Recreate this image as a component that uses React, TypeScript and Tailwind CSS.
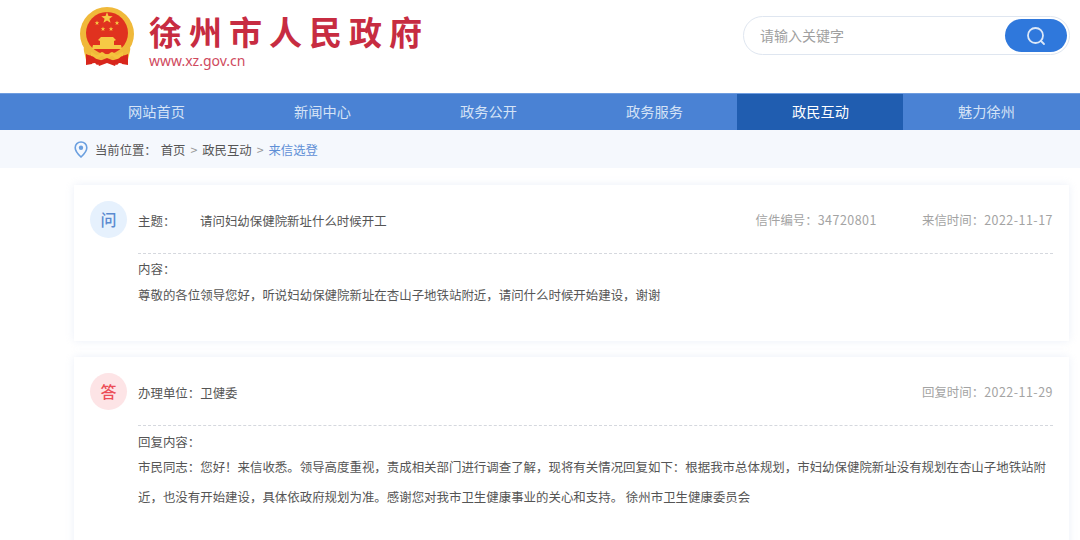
const cjk = "font-['Noto_Sans_CJK_SC','Noto_Sans',sans-serif]";

function Star({ x, y, r }: { x: number; y: number; r: number }) {
  const pts = Array.from({ length: 10 }, (_, i) => {
    const a = -Math.PI / 2 + (i * Math.PI) / 5;
    const rr = i % 2 === 0 ? r : r * 0.42;
    return `${(x + rr * Math.cos(a)).toFixed(2)},${(y + rr * Math.sin(a)).toFixed(2)}`;
  }).join(" ");
  return <polygon points={pts} fill="#f6c945" />;
}

function Emblem() {
  return (
    <svg width="56" height="60" viewBox="0 0 56 60" className="shrink-0">
      <path d="M9 43l-2 14 9-1 2 2 10-5 10 5 2-2 9 1-2-14z" fill="#d8261c" />
      <circle cx="28" cy="27" r="27" fill="#f0b93a" />
      <path d="M5 41c-1 0 1 7 2 12l8-1c4-1 9-3 13-3s9 2 13 3l8 1c1-5 3-12 2-12z" fill="#f0b93a" />
      <circle cx="28" cy="26" r="21" fill="#e0321f" />
      <Star x={28} y={11} r={6} />
      <Star x={18} y={16} r={2.4} />
      <Star x={38} y={16} r={2.4} />
      <Star x={24} y={22} r={2.4} />
      <Star x={32} y={22} r={2.4} />
      <path d="M19 33l3-3h12l3 3-2 1v4h-14v-4z" fill="#f6c945" />
      <path d="M14 38h28l1 4H13z" fill="#f6c945" />
      <path d="M7 47c4 2 7 2 9 1l2 3c-2 2-4 3-5 6l-6 1z" fill="#d8261c" />
      <path d="M49 47c-4 2-7 2-9 1l-2 3c2 2 4 3 5 6l6 1z" fill="#d8261c" />
      <path d="M12 45c3 0 3 3 6 3s3-3 5-3 3 3 5 3 3-3 5-3 3 3 5 3 3-3 6-3v4c-3 0-3 3-6 3s-3-3-5-3-3 3-5 3-3-3-5-3-3 3-5 3-3-3-6-3z" fill="#f5c33d" />
      <path d="M18 55l10-4 10 4-2 4-8-3-8 3z" fill="#d8261c" />
    </svg>
  );
}

function Avatar({ text, tone }: { text: string; tone: "blue" | "red" }) {
  return (
    <div
      className={
        "w-[37px] h-[37px] rounded-full flex items-center justify-center text-[16px] font-medium shrink-0 pb-[2px] " +
        (tone === "blue" ? "bg-[#e6f1fd] text-[#5a8ad0]" : "bg-[#fde4e6] text-[#ec4d57]")
      }
    >
      {text}
    </div>
  );
}

export default function App() {
  const nav = ["网站首页", "新闻中心", "政务公开", "政务服务", "政民互动", "魅力徐州"];
  return (
    <div className={`w-[1080px] h-[540px] overflow-hidden bg-white ${cjk}`}>
      <header className="h-[93px] flex items-start">
        <div className="ml-[79px] mt-[7px] flex gap-[14px]">
          <Emblem />
          <div className="flex flex-col">
            <div className="mt-[4px] text-[33px] leading-[40px] font-bold tracking-[7px] text-[#c72c41] whitespace-nowrap">
              徐州市人民政府
            </div>
            <div className="text-[14px] leading-[20px] text-[#cf4a5e] font-['Noto_Sans',sans-serif]">
              www.xz.gov.cn
            </div>
          </div>
        </div>
        <div className="ml-auto mr-[10px] mt-[16px] w-[327px] h-[39px] rounded-full border border-[#dfe6f0] flex items-center justify-between pl-[16px] pr-[2px]">
          <span className="text-[14px] text-[#a0a0a0]">请输入关键字</span>
          <button className="w-[62px] h-[33px] rounded-full bg-[#2f78dc] flex items-center justify-center">
            <svg width="20" height="20" viewBox="0 0 20 20" fill="none" stroke="#dce8f8" strokeWidth="1.800">
              <circle cx="9.500" cy="9.500" r="7.500" />
              <path d="M15 15l3 3" strokeLinecap="round" />
            </svg>
          </button>
        </div>
      </header>

      <nav className="h-[37px] bg-[#4a82d4] border-t border-[#6f9de0] flex pl-[73px]">
        {nav.map((n, i) => (
          <div
            key={n}
            className={
              "w-[166px] flex items-center justify-center pl-[1px] text-[14.200px] " +
              (i === 4 ? "bg-[#205db0] text-white" : "text-[#d5e3f6]")
            }
          >
            {n}
          </div>
        ))}
      </nav>

      <div className="h-[38px] bg-[#f5f8fd] flex items-center pl-[74px] pt-[2px] text-[12.350px] text-[#555]">
        <svg width="14" height="17" viewBox="0 0 14 17" fill="none" className="mr-[7px] mt-[-2px]">
          <path d="M7 1C3.700 1 1.200 3.500 1.200 6.700 1.200 10.600 7 16 7 16s5.800-5.400 5.800-9.300C12.800 3.500 10.300 1 7 1z" stroke="#6a9fdf" strokeWidth="1.600" />
          <circle cx="7" cy="6.700" r="2.200" fill="#6a9fdf" />
        </svg>
        <span className="mr-[4px]">当前位置：</span>
        <span>首页</span>
        <span className="mx-[5px] text-[#999]">&gt;</span>
        <span>政民互动</span>
        <span className="mx-[5px] text-[#999]">&gt;</span>
        <span className="text-[#5f8fd6]">来信选登</span>
      </div>

      <main className="pt-[17px] pl-[74px] pr-[11px] flex flex-col gap-[16px] text-[12.450px] text-[#555]">
        <section className="h-[156px] bg-white shadow-[0_0_8px_rgba(210,220,240,0.45)] flex gap-[11px] pl-[16px] pr-[16px] pt-[16px]">
          <Avatar text="问" tone="blue" />
          <div className="flex-1">
            <div className="h-[38px] flex items-center pt-[3px]">
              <span className="w-[62px]">主题：</span>
              <span>请问妇幼保健院新址什么时候开工</span>
              <span className="ml-auto mt-[-2px] text-[#a3a3a3]">信件编号：<span className="tracking-[0.5px]">34720801</span></span>
              <span className="ml-[45px] mt-[-2px] text-[#a3a3a3]">来信时间：<span className="tracking-[0.5px]">2022-11-17</span></span>
            </div>
            <div className="mt-[14px] border-t border-dashed border-[#d5d8de] pt-[5px] leading-[20px]">内容：</div>
            <div className="mt-[6px] leading-[20px]">尊敬的各位领导您好，听说妇幼保健院新址在杏山子地铁站附近，请问什么时候开始建设，谢谢</div>
          </div>
        </section>

        <section className="h-[200px] bg-white shadow-[0_0_8px_rgba(210,220,240,0.45)] flex gap-[11px] pl-[16px] pr-[16px] pt-[16px]">
          <Avatar text="答" tone="red" />
          <div className="flex-1">
            <div className="h-[38px] flex items-center pt-[3px]">
              <span>办理单位：卫健委</span>
              <span className="ml-auto mt-[-2px] text-[#a3a3a3]">回复时间：<span className="tracking-[0.5px]">2022-11-29</span></span>
            </div>
            <div className="mt-[14px] border-t border-dashed border-[#d5d8de] pt-[6px] leading-[20px]">回复内容：</div>
            <div className="leading-[30px] mt-[0px]">
              市民同志：您好！来信收悉。领导高度重视，责成相关部门进行调查了解，现将有关情况回复如下：根据我市总体规划，市妇幼保健院新址没有规划在杏山子地铁站附近，也没有开始建设，具体依政府规划为准。感谢您对我市卫生健康事业的关心和支持。 徐州市卫生健康委员会
            </div>
          </div>
        </section>
      </main>
    </div>
  );
}
